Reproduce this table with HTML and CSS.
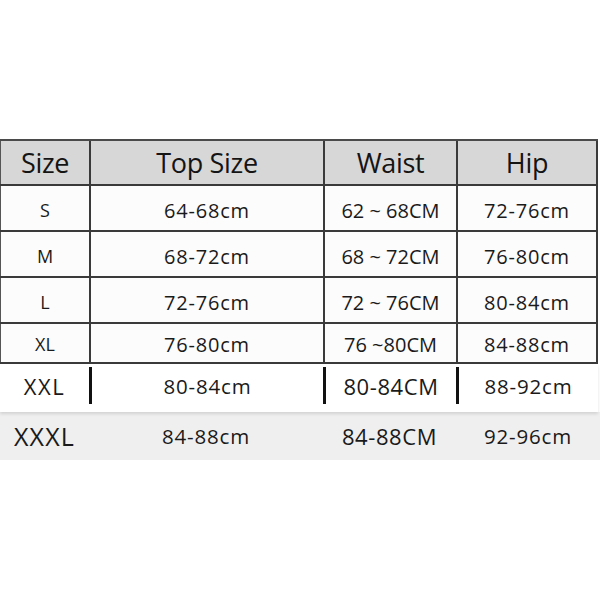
FILE: index.html
```html
<!DOCTYPE html>
<html>
<head>
<meta charset="utf-8">
<link rel="stylesheet" href="styles.css">
</head>
<body>
<div class="chart">
  <div class="row head">
    <div class="c">Size</div>
    <div class="c">Top Size</div>
    <div class="c">Waist</div>
    <div class="c">Hip</div>
  </div>
  <div class="row">
    <div class="c sz">S</div>
    <div class="c cm">64-68cm</div>
    <div class="c up">62 ~ 68CM</div>
    <div class="c cm">72-76cm</div>
  </div>
  <div class="row">
    <div class="c sz">M</div>
    <div class="c cm">68-72cm</div>
    <div class="c up">68 ~ 72CM</div>
    <div class="c cm">76-80cm</div>
  </div>
  <div class="row">
    <div class="c sz">L</div>
    <div class="c cm">72-76cm</div>
    <div class="c up">72 ~ 76CM</div>
    <div class="c cm">80-84cm</div>
  </div>
  <div class="row short">
    <div class="c sz">XL</div>
    <div class="c cm">76-80cm</div>
    <div class="c up">76 ~80CM</div>
    <div class="c cm">84-88cm</div>
  </div>
  <div class="row xxl">
    <div class="c big">XXL</div>
    <div class="c cm2">80-84cm</div>
    <div class="c up2">80-84CM</div>
    <div class="c cm2">88-92cm</div>
  </div>
  <div class="row xxxl">
    <div class="c bigger">XXXL</div>
    <div class="c cm2">84-88cm</div>
    <div class="c up2">84-88CM</div>
    <div class="c cm2">92-96cm</div>
  </div>
</div>
</body>
</html>
```
FILE: styles.css
```css
html, body {
  margin: 0;
  padding: 0;
  background: #ffffff;
}

body {
  font-family: "Open Sans", "DejaVu Sans", sans-serif;
  color: #1a1a1a;
}

.chart {
  padding-top: 139px;
  width: 600px;
}

.row {
  display: grid;
  grid-template-columns: 89px 234px 133px 142px;
  width: 598px;
  height: 46px;
  box-sizing: border-box;
  border-bottom: 2px solid #3a3a3a;
  background: #fcfcfc;
}

.row .c {
  display: flex;
  align-items: center;
  justify-content: center;
  box-sizing: border-box;
  border-left: 2px solid #3a3a3a;
  padding-top: 4px;
  white-space: nowrap;
}

.row .c:first-child {
  border-left: 1px solid #555;
}

.row .c:last-child {
  border-right: 2px solid #3a3a3a;
}

.head {
  height: 47px;
  border-top: 2px solid #4a4a4a;
  background: #d7d7d7;
}

.head .c {
  font-size: 27px;
  color: #141414;
  padding-top: 0;
  letter-spacing: -0.3px;
}

.short {
  height: 40px;
}

.short .c {
  padding-top: 2px;
}

.sz {
  font-size: 18px;
}

.cm {
  font-size: 20px;
  letter-spacing: 0.8px;
}

.up {
  font-size: 20px;
  letter-spacing: 0;
}

.xxl {
  height: 48px;
  border-bottom: none;
  background: #ffffff;
  padding-top: 3px;
  box-shadow: 0 2px 3px rgba(0, 0, 0, 0.12);
  position: relative;
}

.xxl .c {
  height: 37px;
  border-left: 3px solid #111;
  padding-top: 0;
}

.xxl .c:first-child,
.xxl .c:last-child {
  border-left: none;
  border-right: none;
}

.xxl .c:last-child {
  border-left: 3px solid #111;
}

.xxxl {
  height: 48px;
  border-bottom: none;
  background: #efefef;
  width: 600px;
  grid-template-columns: 89px 234px 133px 144px;
}

.xxxl .c,
.xxxl .c:first-child,
.xxxl .c:last-child {
  border: none;
  padding-top: 0;
}

.big {
  font-size: 22px;
  letter-spacing: 1.5px;
}

.bigger {
  font-size: 25px;
  letter-spacing: 1.2px;
}

.cm2 {
  font-size: 20.5px;
  letter-spacing: 0.8px;
}

.up2 {
  font-size: 22px;
  letter-spacing: 0.6px;
}
```
